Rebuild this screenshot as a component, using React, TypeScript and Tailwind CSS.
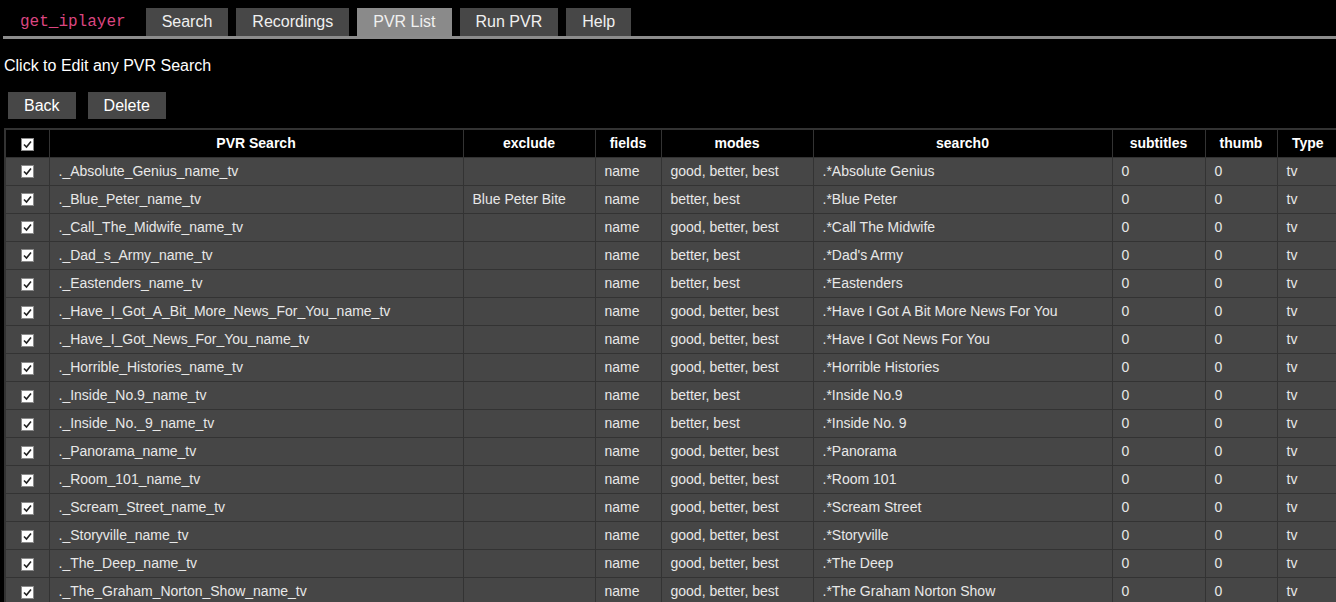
import React from 'react';

const tabs = ['Search', 'Recordings', 'PVR List', 'Run PVR', 'Help'];

const GBB = 'good, better, best';
const BB = 'better, best';

const rows: [string, string, string, string][] = [
  ['._Absolute_Genius_name_tv', '', GBB, '.*Absolute Genius'],
  ['._Blue_Peter_name_tv', 'Blue Peter Bite', BB, '.*Blue Peter'],
  ['._Call_The_Midwife_name_tv', '', GBB, '.*Call The Midwife'],
  ['._Dad_s_Army_name_tv', '', BB, ".*Dad's Army"],
  ['._Eastenders_name_tv', '', BB, '.*Eastenders'],
  ['._Have_I_Got_A_Bit_More_News_For_You_name_tv', '', GBB, '.*Have I Got A Bit More News For You'],
  ['._Have_I_Got_News_For_You_name_tv', '', GBB, '.*Have I Got News For You'],
  ['._Horrible_Histories_name_tv', '', GBB, '.*Horrible Histories'],
  ['._Inside_No.9_name_tv', '', BB, '.*Inside No.9'],
  ['._Inside_No._9_name_tv', '', BB, '.*Inside No. 9'],
  ['._Panorama_name_tv', '', GBB, '.*Panorama'],
  ['._Room_101_name_tv', '', GBB, '.*Room 101'],
  ['._Scream_Street_name_tv', '', GBB, '.*Scream Street'],
  ['._Storyville_name_tv', '', GBB, '.*Storyville'],
  ['._The_Deep_name_tv', '', GBB, '.*The Deep'],
  ['._The_Graham_Norton_Show_name_tv', '', GBB, '.*The Graham Norton Show'],
];

function Check() {
  return (
    <span className="inline-flex w-[13px] h-[13px] bg-white border border-[#8a8a8a] items-center justify-center align-middle">
      <svg width="11" height="11" viewBox="0 0 11 11">
        <polyline points="2,5.5 4.5,8 9,2.5" fill="none" stroke="#222" strokeWidth="1.6" />
      </svg>
    </span>
  );
}

export default function App() {
  const th = 'border border-[#333] font-bold text-white text-center text-[14px] px-2';
  const td = 'border border-[#333] pl-[9px] pr-2 text-[14px] text-[#e8e8e8] whitespace-nowrap overflow-hidden';

  return (
    <div className="min-h-screen bg-black overflow-hidden font-['Liberation_Sans',Arial,sans-serif]">
      {/* Tab bar */}
      <div className="ml-[3px] pt-2 flex gap-2 border-b-[3px] border-[#8c8c8c]">
        <div className="h-[28px] pl-[17px] pr-3 flex items-center font-['Liberation_Mono',monospace] text-[16px] text-[#dc4680]">
          get_iplayer
        </div>
        {tabs.map(tab => (
          <div
            key={tab}
            className={`h-[28px] px-4 flex items-center text-[16px] text-[#f0f0f0] ${tab === 'PVR List' ? 'bg-[#8a8a8a]' : 'bg-[#474747]'}`}
          >
            {tab}
          </div>
        ))}
      </div>

      <p className="mt-[18px] ml-1 text-[16px] leading-[18px] text-white">Click to Edit any PVR Search</p>

      <div className="mt-[17px] ml-2 flex gap-3">
        <button className="h-[27px] px-4 bg-[#474747] text-white text-[16px]">Back</button>
        <button className="h-[27px] px-4 bg-[#474747] text-white text-[16px]">Delete</button>
      </div>

      <table className="mt-[9px] ml-1 table-fixed border-collapse border-2 border-[#333] w-[1334px]">
        <colgroup>
          <col className="w-[44px]" />
          <col className="w-[414px]" />
          <col className="w-[132px]" />
          <col className="w-[66px]" />
          <col className="w-[152px]" />
          <col className="w-[299px]" />
          <col className="w-[93px]" />
          <col className="w-[72px]" />
          <col className="w-[62px]" />
        </colgroup>
        <thead>
          <tr className="h-[28px] bg-black">
            <th className="border border-[#333] text-center"><Check /></th>
            <th className={th}>PVR Search</th>
            <th className={th}>exclude</th>
            <th className={th}>fields</th>
            <th className={th}>modes</th>
            <th className={th}>search0</th>
            <th className={th}>subtitles</th>
            <th className={th}>thumb</th>
            <th className={th}>Type</th>
          </tr>
        </thead>
        <tbody>
          {rows.map(([name, exclude, modes, search]) => (
            <tr key={name} className="h-[28.07px] bg-[#464646]">
              <td className="border border-[#333] text-center"><Check /></td>
              <td className={td}>{name}</td>
              <td className={td}>{exclude}</td>
              <td className={td}>name</td>
              <td className={td}>{modes}</td>
              <td className={td}>{search}</td>
              <td className={td}>0</td>
              <td className={td}>0</td>
              <td className={td}>tv</td>
            </tr>
          ))}
        </tbody>
      </table>
    </div>
  );
}
